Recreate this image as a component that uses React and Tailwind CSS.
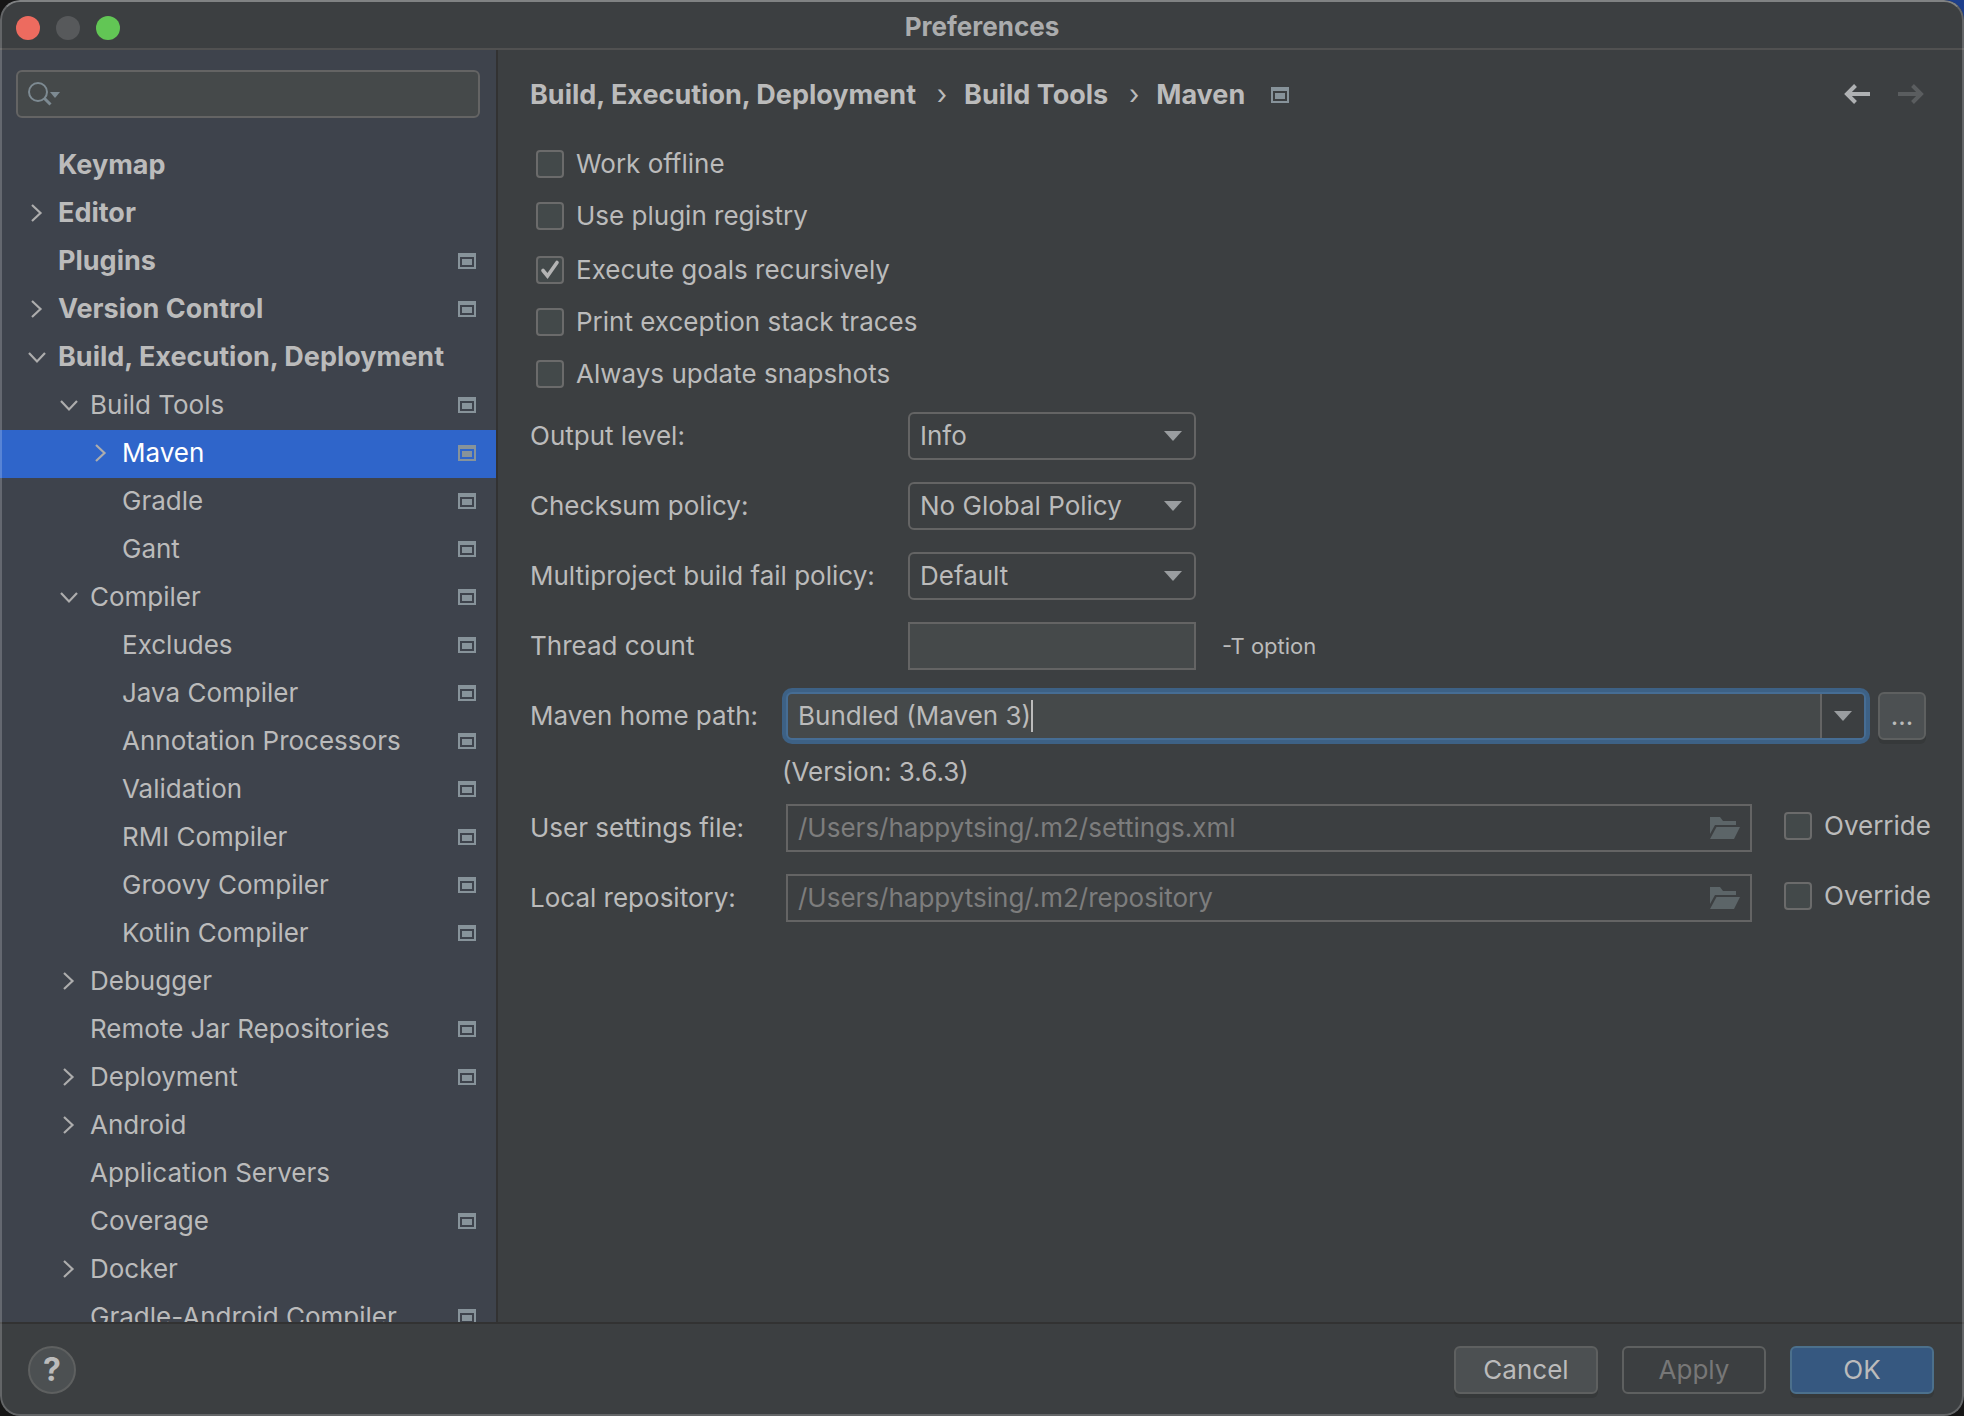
import { useState } from 'react';

const TREE = [
    { label: 'Keymap', level: 0 },
    { label: 'Editor', level: 0, arrow: 'right' },
    { label: 'Plugins', level: 0, project: true },
    { label: 'Version Control', level: 0, arrow: 'right', project: true },
    { label: 'Build, Execution, Deployment', level: 0, arrow: 'down' },
    { label: 'Build Tools', level: 1, arrow: 'down', project: true },
    { label: 'Maven', level: 2, arrow: 'right', project: true },
    { label: 'Gradle', level: 2, project: true },
    { label: 'Gant', level: 2, project: true },
    { label: 'Compiler', level: 1, arrow: 'down', project: true },
    { label: 'Excludes', level: 2, project: true },
    { label: 'Java Compiler', level: 2, project: true },
    { label: 'Annotation Processors', level: 2, project: true },
    { label: 'Validation', level: 2, project: true },
    { label: 'RMI Compiler', level: 2, project: true },
    { label: 'Groovy Compiler', level: 2, project: true },
    { label: 'Kotlin Compiler', level: 2, project: true },
    { label: 'Debugger', level: 1, arrow: 'right' },
    { label: 'Remote Jar Repositories', level: 1, project: true },
    { label: 'Deployment', level: 1, arrow: 'right', project: true },
    { label: 'Android', level: 1, arrow: 'right' },
    { label: 'Application Servers', level: 1 },
    { label: 'Coverage', level: 1, project: true },
    { label: 'Docker', level: 1, arrow: 'right' },
    { label: 'Gradle-Android Compiler', level: 1, project: true },
];

const INDENT = ['pl-[26px]', 'pl-[58px]', 'pl-[90px]'];

function ProjectIcon() {
    return (
        <svg width="18" height="16" viewBox="0 0 18 16" className="shrink-0 text-[#87939a]" aria-hidden="true">
            <path fill="currentColor" fillRule="evenodd" d="M0 0h18v16H0zM2 4v10h14V4z" />
            <path fill="currentColor" d="M4 6h10v6H4z" />
        </svg>
    );
}

function TreeArrow({ direction }) {
    return (
        <svg width="20" height="20" viewBox="0 0 20 20" fill="none" stroke="#adadad" strokeWidth="2.2" aria-hidden="true">
            {direction === 'right' && <path d="M6 2l8.5 8L6 18" />}
            {direction === 'down' && <path d="M3 6l8 8.5L19 6" />}
        </svg>
    );
}

function DropArrow() {
    return (
        <svg width="18" height="10" viewBox="0 0 18 10" className="pointer-events-none" aria-hidden="true">
            <path fill="#9a9da0" d="M0 0h18L9 10z" />
        </svg>
    );
}

function FolderIcon() {
    return (
        <svg width="30" height="22" viewBox="0 0 30 22" className="shrink-0" aria-hidden="true">
            <path fill="#5c6568" d="M0 0h10l3 4h13v4H5L0 17z" />
            <path fill="#5c6568" d="M6.5 10H30l-6 12H0z" />
        </svg>
    );
}

function Checkbox({ label, defaultChecked }) {
    return (
        <label className="flex h-[52px] items-center gap-3 whitespace-nowrap">
            <span className="relative flex size-7">
                <input
                    type="checkbox"
                    defaultChecked={defaultChecked}
                    className="peer size-7 appearance-none rounded-[4px] border-2 border-[#6b6b6b] bg-[#43494a]"
                />
                <svg viewBox="0 0 28 28" className="pointer-events-none absolute inset-0 hidden size-7 peer-checked:block" aria-hidden="true">
                    <path d="M7 14.5l4.5 5.5L21 6.500" fill="none" stroke="#b4b4b4" strokeWidth="3.6" strokeLinecap="round" />
                </svg>
            </span>
            {label}
        </label>
    );
}

function SelectRow({ id, label, options }) {
    return (
        <div className="flex h-12 items-center">
            <label htmlFor={id} className="w-[378px]">{label}</label>
            <div className="relative flex h-12 w-72 items-center">
                <select id={id} className="h-12 w-full appearance-none rounded-md border-2 border-[#646464] bg-[#3c3f41] pl-[10px]">
                    {options.map((option) => (
                        <option key={option}>{option}</option>
                    ))}
                </select>
                <span className="pointer-events-none absolute right-[14px]">
                    <DropArrow />
                </span>
            </div>
        </div>
    );
}

function PathRow({ id, label, value }) {
    return (
        <div className="flex h-12 items-center">
            <label htmlFor={id} className="w-64 shrink-0">{label}</label>
            <div className="flex h-12 flex-1 items-center border-2 border-[#646464] pr-[10px]">
                <input id={id} type="text" disabled defaultValue={value} className="min-w-0 flex-1 pl-[10px] text-[#7d7d7d]" />
                <FolderIcon />
            </div>
            <div className="ml-8 w-[150px] pb-1">
                <Checkbox label="Override" />
            </div>
        </div>
    );
}

function Sidebar() {
    const [selected, setSelected] = useState('Maven');

    return (
        <aside className="flex w-[498px] shrink-0 flex-col overflow-hidden border-r-2 border-[#323232] bg-[#3e434c]">
            <div className="mx-4 mt-5 mb-6 flex h-12 shrink-0 items-center rounded-md border-2 border-[#646464] bg-[#45494a] px-[10px]">
                <svg width="32" height="24" viewBox="0 0 32 24" fill="none" aria-hidden="true">
                    <circle cx="10" cy="10" r="9" stroke="#7d8a92" strokeWidth="2" />
                    <path d="M16.5 16.5l6 6" stroke="#7d8a92" strokeWidth="3" />
                    <path d="M22 10h10l-5 6z" fill="#7d8a92" />
                </svg>
                <input type="text" aria-label="Search" className="min-w-0 flex-1 outline-none" />
            </div>
            <nav className="min-h-0 flex-1 overflow-hidden">
                {TREE.map((item) => (
                    <button
                        key={item.label}
                        type="button"
                        onClick={() => setSelected(item.label)}
                        className={`flex h-12 w-full items-center pr-5 pb-[2px] text-left whitespace-nowrap ${INDENT[item.level]} ${item.level === 0 ? 'text-[27px] font-bold' : ''} ${selected === item.label ? 'bg-[#2f65ca] text-white' : ''}`}
                    >
                        <span className="w-8 shrink-0">
                            <TreeArrow direction={item.arrow} />
                        </span>
                        <span className="flex-1">{item.label}</span>
                        {item.project && <ProjectIcon />}
                    </button>
                ))}
            </nav>
        </aside>
    );
}

function MavenSettings() {
    return (
        <main className="min-w-0 flex-1 pr-[30px] pl-8">
            <header className="flex h-[88px] items-center justify-between pr-[10px]">
                <div className="flex items-center pt-[2px] text-[27px] font-bold whitespace-nowrap">
                    <span>Build, Execution, Deployment</span>
                    <span className="w-12 pl-1 text-center font-normal">›</span>
                    <span>Build Tools</span>
                    <span className="w-12 pl-1 text-center font-normal">›</span>
                    <span className="mr-[26px]">Maven</span>
                    <ProjectIcon />
                </div>
                <div className="flex gap-7">
                    <button type="button" aria-label="Back">
                        <svg width="26" height="20" viewBox="0 0 26 20" fill="none" stroke="#afb1b3" strokeWidth="4" aria-hidden="true">
                            <path d="M26 10H3M11.5 1.5L3 10l8.5 8.5" />
                        </svg>
                    </button>
                    <button type="button" aria-label="Forward" disabled>
                        <svg width="26" height="20" viewBox="0 0 26 20" fill="none" stroke="#5a5d5f" strokeWidth="4" aria-hidden="true">
                            <path d="M0 10h23M14.5 1.5L23 10l-8.5 8.5" />
                        </svg>
                    </button>
                </div>
            </header>

            <div className="flex flex-col gap-[2px] pl-[6px]">
                <div>
                    <Checkbox label="Work offline" />
                    <Checkbox label="Use plugin registry" />
                </div>
                <div>
                    <Checkbox label="Execute goals recursively" defaultChecked />
                    <Checkbox label="Print exception stack traces" />
                    <Checkbox label="Always update snapshots" />
                </div>
            </div>

            <div className="mt-3 flex flex-col gap-[22px]">
                <SelectRow id="output" label="Output level:" options={['Info', 'Debug', 'Warn', 'Error']} />
                <SelectRow id="checksum" label="Checksum policy:" options={['No Global Policy', 'Fail', 'Warn']} />
                <SelectRow id="fail-policy" label="Multiproject build fail policy:" options={['Default', 'Fail Fast', 'Fail Never']} />
                <div className="flex h-12 items-center">
                    <label htmlFor="threads" className="w-[378px]">Thread count</label>
                    <input id="threads" type="text" className="h-12 w-72 border-2 border-[#646464] bg-[#45494a] px-[10px]" />
                    <span className="ml-[26px] text-[22px]">-T option</span>
                </div>
                <div className="flex h-12 items-center pr-2">
                    <label htmlFor="home" className="w-64 shrink-0">Maven home path:</label>
                    <div className="flex h-12 flex-1 items-stretch overflow-hidden rounded-md border-2 border-[#466d94] bg-[#45494a] ring-4 ring-[#3d6185]">
                        <div className="flex flex-1 items-center pl-[10px]">
                            <input id="home" type="text" defaultValue="Bundled (Maven 3)" className="field-sizing-content outline-none" />
                            <span className="h-8 w-[2px] bg-[#bbbbbb]" />
                        </div>
                        <button type="button" aria-label="Show versions" className="flex w-11 items-center justify-center border-l-2 border-[#646464] bg-[#3c3f41]">
                            <DropArrow />
                        </button>
                    </div>
                    <button type="button" className="ml-3 size-12 rounded-md border-2 border-[#5e6060] bg-[#4c5052] shadow-[0_4px_0_#36393a]">...</button>
                </div>
            </div>

            <p className="flex h-16 items-center pl-[252px]">(Version: 3.6.3)</p>

            <div className="flex flex-col gap-[22px]">
                <PathRow id="settings" label="User settings file:" value="/Users/happytsing/.m2/settings.xml" />
                <PathRow id="repository" label="Local repository:" value="/Users/happytsing/.m2/repository" />
            </div>
        </main>
    );
}

function App() {
    return (
        <div className="h-screen bg-[radial-gradient(circle_at_top_right,#1d3f8c_20px,#161616_24px)] font-['Inter','Liberation_Sans',sans-serif] text-[26px] leading-8 text-[#bbbbbb]">
            <div className="relative flex h-full flex-col overflow-hidden rounded-[20px] bg-[#3c3f41]">
                <div className="flex h-[50px] shrink-0 items-center border-b-2 border-[#515151] px-4 pt-2">
                    <div className="flex flex-1 gap-4">
                        <button type="button" aria-label="Close" className="size-6 rounded-full bg-[#ed6b5f]" />
                        <button type="button" aria-label="Minimize" className="size-6 rounded-full bg-[#57595b]" />
                        <button type="button" aria-label="Zoom" className="size-6 rounded-full bg-[#62c655]" />
                    </div>
                    <h1 className="pb-[2px] font-bold text-[#abacad]">Preferences</h1>
                    <div className="flex-1" />
                </div>

                <div className="flex min-h-0 flex-1">
                    <Sidebar />
                    <MavenSettings />
                </div>

                <footer className="flex h-[94px] shrink-0 items-center gap-6 border-t-2 border-[#323232] pr-[30px] pl-7">
                    <button type="button" aria-label="Help" className="mr-auto size-12 rounded-full border-2 border-[#5e6060] bg-[#4c5052] text-[32px] font-bold">?</button>
                    <button type="button" className="h-12 w-36 rounded-md border-2 border-[#5e6060] bg-[#4c5052] shadow-[0_4px_0_#36393a]">Cancel</button>
                    <button type="button" disabled className="h-12 w-36 rounded-md border-2 border-[#5e6060] text-[#777777]">Apply</button>
                    <button type="button" className="h-12 w-36 rounded-md border-2 border-[#4c708c] bg-[#365880] shadow-[0_4px_0_#36393a]">OK</button>
                </footer>

                <div className="pointer-events-none absolute inset-0 rounded-[20px] border-2 border-white/20 border-t-white/35" />
            </div>
        </div>
    );
}

export default App;
